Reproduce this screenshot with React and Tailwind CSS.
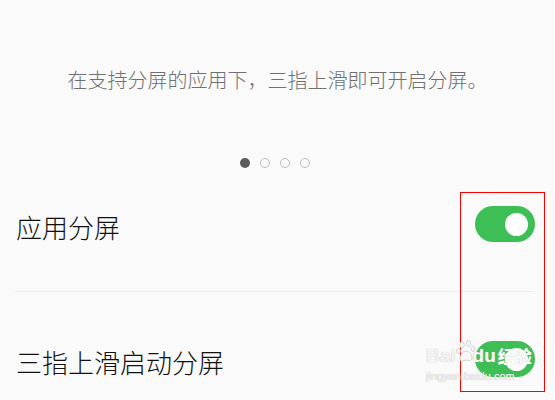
import React from 'react';

const cjk = { fontFamily: '"Noto Sans CJK SC", "Noto Sans", sans-serif' };

const Toggle = ({ on = true, className = '' }) => (
    <div className={`w-[60px] h-[36px] rounded-full flex items-center px-[7px] ${on ? 'bg-[#3dbf56] justify-end' : 'bg-[#d5d5d5] justify-start'} ${className}`}>
        <div className='w-[23px] h-[23px] rounded-full bg-white' />
    </div>
);

const Dots = ({ count = 4, active = 0 }) => (
    <div className='flex justify-center gap-[10px] pr-[5px]'>
        {Array.from({ length: count }).map((_, i) => (
            <span
                key={i}
                className={`w-[10px] h-[10px] rounded-full ${i === active ? 'bg-[#5c5c5c]' : 'border-[1.5px] border-[#bdbdbd]'}`}
            />
        ))}
    </div>
);

const SettingRow = ({ label, className }) => (
    <div className={`flex items-center justify-between pl-4 pr-5 ${className}`}>
        <span className='text-[26px] leading-[34px] font-light text-[#111111]'>{label}</span>
        <Toggle className='mb-[6px]' />
    </div>
);

const Watermark = () => (
    <div className='absolute left-[426px] top-[340px] flex flex-col pointer-events-none select-none'>
        <div className='flex items-end text-[19px] leading-[28px] font-bold text-[#f4f4f4] [text-shadow:0_0_1px_#b5b5b5]' style={{ fontFamily: '"Liberation Sans", Arial, sans-serif' }}>
            <span>Bai</span>
            <svg width='20' height='26' viewBox='0 0 20 26' className='-mr-[3px] mb-[4px]'>
                <g fill='#f6f6f6' stroke='#c4c4c4' strokeWidth='0.7'>
                    <ellipse cx='6' cy='5' rx='2.3' ry='3' />
                    <ellipse cx='12.5' cy='3.5' rx='2.3' ry='3' />
                    <ellipse cx='2.5' cy='11' rx='2' ry='2.6' />
                    <ellipse cx='17' cy='9' rx='2' ry='2.6' />
                    <path d='M4 19 C4 13 8 11 10 11 C13 11 16 14 16 18 C16 21 13 21 10 20 C7 21 4 22 4 19 Z' />
                </g>
            </svg>
            <span>du</span>
            <span className='ml-[2px] text-[17px] text-white' style={cjk}>经验</span>
        </div>
        <span className='text-[11px] leading-[13px] text-[#f4f4f4] [text-shadow:0_0_1px_#a8a8a8]' style={{ fontFamily: '"Liberation Sans", Arial, sans-serif' }}>
            jingyan.baidu.com
        </span>
    </div>
);

export default function App() {
    return (
        <div className='relative w-[555px] h-[400px] overflow-hidden bg-[#fafafa]' style={cjk}>
            <p className='pt-[67px] text-center text-[20px] leading-[26px] font-light text-[#707070]'>
                在支持分屏的应用下，三指上滑即可开启分屏。
            </p>

            <div className='mt-[65px]'>
                <Dots />
            </div>

            <SettingRow label='应用分屏' className='h-[123px] pb-[5px]' />
            <div className='ml-[15px] mr-[21px] h-px bg-[#ebebeb]' />
            <SettingRow label='三指上滑启动分屏' className='h-[140px]' />

            {/* annotation box */}
            <div className='absolute left-[460px] top-[192px] w-[85px] h-[200px] border border-[#ff0000] pointer-events-none' />

            <Watermark />
        </div>
    );
}
